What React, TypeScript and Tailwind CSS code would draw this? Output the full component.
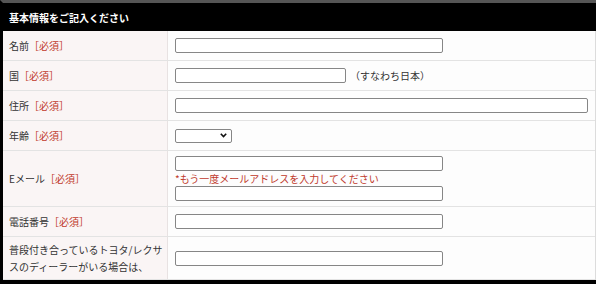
import { ReactNode } from "react";

const font = { fontFamily: '"Noto Sans CJK JP", "Noto Sans", sans-serif' };

function Req() {
  return <span className="text-[#c0392b]">［必須］</span>;
}

function Row({ label, h, children }: { label: ReactNode; h: string; children: ReactNode }) {
  return (
    <div className={`grid grid-cols-[165px_1fr] border-b border-[#e3e3e3] ${h}`}>
      <div className="flex items-center border-r border-[#e8e2e2] bg-[#faf5f5] pl-[6px] leading-[17px] text-[#333]">
        {label}
      </div>
      <div className="flex flex-col justify-center bg-[#fdfdfd] pl-[7px]">{children}</div>
    </div>
  );
}

function Field({ w }: { w: string }) {
  return (
    <input
      type="text"
      className={`h-[15px] ${w} rounded-[2px] border border-[#868686] bg-white outline-none`}
    />
  );
}

export default function App() {
  return (
    <main className="h-[284px] w-[600px] overflow-hidden bg-white text-[10px]" style={font}>
      <div className="w-[596px] border-t-[3px] border-l-[3px] border-t-[#555] border-l-black">
        <div className="flex h-[28px] items-center bg-black pl-[6px] font-bold text-white">
          基本情報をご記入ください
        </div>
        <div className="border-r border-[#dcdcdc]">
          <Row h="h-[30px]" label={<span>名前<Req /></span>}>
            <Field w="w-[268px]" />
          </Row>
          <Row h="h-[30px]" label={<span>国<Req /></span>}>
            <div className="flex items-center">
              <Field w="w-[171px]" />
              <span className="ml-[4px] text-[#333]">（すなわち日本）</span>
            </div>
          </Row>
          <Row h="h-[30px]" label={<span>住所<Req /></span>}>
            <Field w="w-[413px]" />
          </Row>
          <Row h="h-[30px]" label={<span>年齢<Req /></span>}>
            <div className="relative h-[14px] w-[57px]">
              <select className="h-[14px] w-[57px] appearance-none rounded-[2px] border border-[#868686] bg-white outline-none" />
              <svg
                className="pointer-events-none absolute right-[5px] top-[4px]"
                width="7"
                height="5"
                viewBox="0 0 7 5"
              >
                <path d="M0.8 0.8 L3.5 3.6 L6.2 0.8" fill="none" stroke="#111" strokeWidth="1.6" />
              </svg>
            </div>
          </Row>
          <Row h="h-[56px]" label={<span>Eメール<Req /></span>}>
            <Field w="w-[268px]" />
            <div className="my-[1px] leading-[13px] text-[#c0392b]">*もう一度メールアドレスを入力してください</div>
            <Field w="w-[268px]" />
          </Row>
          <Row h="h-[30px]" label={<span>電話番号<Req /></span>}>
            <Field w="w-[268px]" />
          </Row>
          <Row
            h="h-[43px]"
            label={
              <span>
                普段付き合っているトヨタ/レクサ
                <br />
                スのディーラーがいる場合は、
              </span>
            }
          >
            <Field w="w-[268px]" />
          </Row>
        </div>
        <div className="-ml-[3px] h-[4px] w-[596px] bg-black" />
      </div>
    </main>
  );
}
